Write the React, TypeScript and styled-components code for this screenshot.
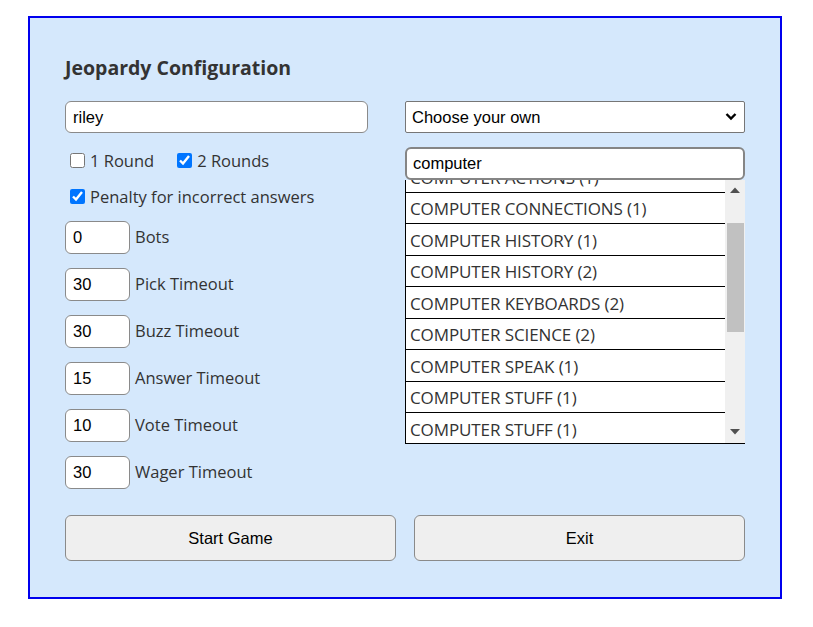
import React from "react";
import styled, { createGlobalStyle } from "styled-components";

const Global = createGlobalStyle`
  html, body { margin: 0; padding: 0; background: #ffffff; }
  body { font-family: "Open Sans", "Liberation Sans", sans-serif; }
`;

const Panel = styled.div`
  box-sizing: border-box;
  margin: 16px 0 0 28px;
  width: 754px;
  height: 583px;
  border: 2px solid #0000ee;
  background: #d5e8fc;
  padding: 38px 37px 0 35px;
  display: flex;
  flex-direction: column;
`;

const Title = styled.h2`
  margin: 0;
  font-family: "Open Sans", sans-serif;
  font-size: 19.5px;
  line-height: 24px;
  font-weight: 700;
  color: #333333;
`;

const Main = styled.div`
  margin-top: 20.5px;
  display: grid;
  grid-template-columns: 303px 340px;
  column-gap: 37px;
  align-items: start;
`;

const Column = styled.div`
  display: flex;
  flex-direction: column;
`;

const TextInput = styled.input<{ $w?: number }>`
  box-sizing: border-box;
  width: ${(p) => (p.$w ? `${p.$w}px` : "100%")};
  height: ${(p) => (p.$w ? 33 : 32)}px;
  margin: 0;
  padding: 1px 7px 0 7px;
  border: 1px solid #8a8a8a;
  border-radius: 6px;
  background: #ffffff;
  font-family: "Liberation Sans", Arial, sans-serif;
  font-size: 16.5px;
  color: #000000;
  outline: none;
`;

const CheckRow = styled.div<{ $mt: number }>`
  margin-top: ${(p) => p.$mt}px;
  height: 24px;
  display: flex;
  align-items: center;
  padding-left: 5px;
`;

const CheckLabel = styled.label<{ $gapRight?: number }>`
  display: flex;
  align-items: center;
  gap: 5px;
  margin-right: ${(p) => p.$gapRight ?? 0}px;
  font-size: 16.5px;
  color: #333333;
  white-space: nowrap;
`;

const Check = styled.input`
  width: 15px;
  height: 15px;
  margin: 0;
  accent-color: #0075ff;
`;

const NumList = styled.div`
  margin-top: 12px;
  display: flex;
  flex-direction: column;
  gap: 14px;
`;

const NumRow = styled.div`
  display: flex;
  align-items: center;
  gap: 5px;
  height: 33px;
`;

const NumLabel = styled.span`
  font-size: 16.5px;
  color: #333333;
  white-space: nowrap;
  margin-top: -1px;
`;

const SelectWrap = styled.div`
  position: relative;
  height: 32px;
`;

const Select = styled.select`
  box-sizing: border-box;
  width: 100%;
  height: 32px;
  margin: 0;
  padding: 0 6px;
  border: 1px solid #767676;
  border-radius: 2px;
  background: #ffffff;
  appearance: none;
  font-family: "Liberation Sans", Arial, sans-serif;
  font-size: 16.5px;
  color: #000000;
  outline: none;
`;

const Chevron = styled.svg`
  position: absolute;
  right: 8px;
  top: 11px;
  width: 12px;
  height: 9px;
  pointer-events: none;
`;

const Search = styled.input`
  box-sizing: border-box;
  width: 100%;
  height: 33px;
  margin: 14px 0 0 0;
  padding: 0 6px;
  border: 2px solid #858585;
  border-radius: 6px;
  background: #ffffff;
  font-family: "Liberation Sans", Arial, sans-serif;
  font-size: 16.5px;
  color: #000000;
  outline: none;
  position: relative;
  z-index: 1;
`;

const ListBox = styled.div`
  box-sizing: border-box;
  height: 264px;
  display: flex;
  border-left: 1px solid #000000;
  border-bottom: 1px solid #000000;
  background: #ffffff;
`;

const ListViewport = styled.div`
  flex: 1;
  overflow: hidden;
`;

const ListInner = styled.ul`
  list-style: none;
  margin: -18.5px 0 0 0;
  padding: 0;
`;

const Item = styled.li`
  box-sizing: border-box;
  height: 31.5px;
  display: flex;
  align-items: center;
  padding: 2px 0 0 4px;
  border-bottom: 1px solid #000000;
  font-size: 17px;
  letter-spacing: -0.1px;
  color: #333333;
  white-space: nowrap;
  &:last-child { border-bottom: none; }
`;

const Scrollbar = styled.div`
  width: 20px;
  background: #f0f0f0;
  display: flex;
  flex-direction: column;
  align-items: center;
`;

const ArrowBtn = styled.div`
  height: 21px;
  width: 20px;
  display: flex;
  align-items: center;
  justify-content: center;
`;

const Track = styled.div`
  flex: 1;
  width: 100%;
  display: flex;
  justify-content: center;
`;

const Thumb = styled.div`
  margin-top: 22px;
  width: 17px;
  height: 109px;
  background: #c1c1c1;
`;

const ButtonRow = styled.div`
  margin-top: 26px;
  display: grid;
  grid-template-columns: 331px 331px;
  column-gap: 18px;
`;

const Button = styled.button`
  box-sizing: border-box;
  height: 46px;
  margin: 0;
  padding-top: 2px;
  border: 1px solid #8a8a8a;
  border-radius: 6px;
  background: #efefef;
  font-family: "Liberation Sans", Arial, sans-serif;
  font-size: 16.5px;
  color: #000000;
`;

const timeouts = [
  { v: "0", label: "Bots" },
  { v: "30", label: "Pick Timeout" },
  { v: "30", label: "Buzz Timeout" },
  { v: "15", label: "Answer Timeout" },
  { v: "10", label: "Vote Timeout" },
  { v: "30", label: "Wager Timeout" },
];

const categories = [
  "COMPUTER ACTIONS (1)",
  "COMPUTER CONNECTIONS (1)",
  "COMPUTER HISTORY (1)",
  "COMPUTER HISTORY (2)",
  "COMPUTER KEYBOARDS (2)",
  "COMPUTER SCIENCE (2)",
  "COMPUTER SPEAK (1)",
  "COMPUTER STUFF (1)",
  "COMPUTER STUFF (1)",
];

export default function App() {
  return (
    <>
      <Global />
      <Panel>
        <Title>Jeopardy Configuration</Title>
        <Main>
          <Column>
            <TextInput defaultValue="riley" />
            <CheckRow $mt={16}>
              <CheckLabel $gapRight={23}>
                <Check type="checkbox" />1 Round
              </CheckLabel>
              <CheckLabel>
                <Check type="checkbox" defaultChecked />2 Rounds
              </CheckLabel>
            </CheckRow>
            <CheckRow $mt={12}>
              <CheckLabel>
                <Check type="checkbox" defaultChecked />Penalty for incorrect answers
              </CheckLabel>
            </CheckRow>
            <NumList>
              {timeouts.map((t) => (
                <NumRow key={t.label}>
                  <TextInput $w={65} defaultValue={t.v} />
                  <NumLabel>{t.label}</NumLabel>
                </NumRow>
              ))}
            </NumList>
          </Column>
          <Column>
            <SelectWrap>
              <Select defaultValue="own">
                <option value="own">Choose your own</option>
              </Select>
              <Chevron viewBox="0 0 12 9">
                <path d="M1.5 2 L6 6.5 L10.5 2" fill="none" stroke="#000" strokeWidth="2.4" />
              </Chevron>
            </SelectWrap>
            <Search defaultValue="computer" />
            <ListBox>
              <ListViewport>
                <ListInner>
                  {categories.map((c, i) => (
                    <Item key={i}>{c}</Item>
                  ))}
                </ListInner>
              </ListViewport>
              <Scrollbar>
                <ArrowBtn>
                  <svg width="10" height="6" viewBox="0 0 10 6">
                    <path d="M0 6 L5 0.5 L10 6 Z" fill="#505050" />
                  </svg>
                </ArrowBtn>
                <Track>
                  <Thumb />
                </Track>
                <ArrowBtn>
                  <svg width="10" height="6" viewBox="0 0 10 6">
                    <path d="M0 0 L5 5.5 L10 0 Z" fill="#505050" />
                  </svg>
                </ArrowBtn>
              </Scrollbar>
            </ListBox>
          </Column>
        </Main>
        <ButtonRow>
          <Button>Start Game</Button>
          <Button>Exit</Button>
        </ButtonRow>
      </Panel>
    </>
  );
}
